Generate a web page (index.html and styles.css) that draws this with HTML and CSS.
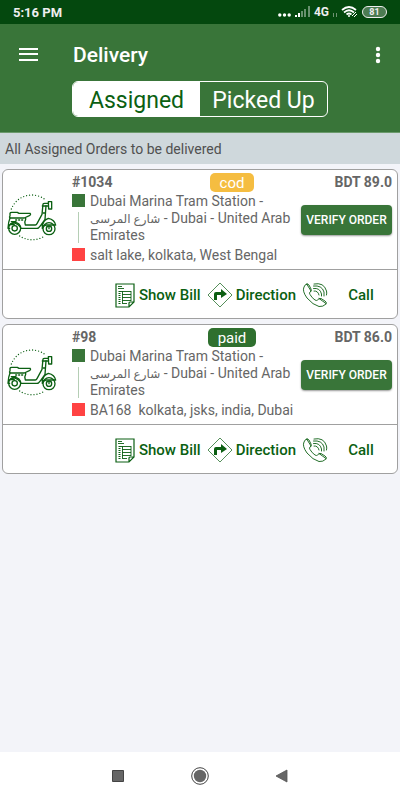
FILE: index.html
```html
<!DOCTYPE html>
<html lang="en">

<head>
    <meta charset="utf-8">
    <meta name="viewport" content="width=device-width, initial-scale=1">
    <title>Delivery</title>
    <link rel="stylesheet" href="styles.css">
</head>

<body>
    <svg class="sprite" aria-hidden="true">
        <symbol id="scooter" viewBox="21 15 150 144">
            <g fill="none" stroke="currentColor" stroke-width="4" stroke-linecap="round" stroke-linejoin="round">
                <path d="M34 60A66 66 0 0 1 136 32M59 141A68 68 0 0 0 134 141" stroke-dasharray="0 9" />
                <path d="M30 81V73Q31 70 35 70H52L57 73H90Q94 77 88 80L73 87H30Q27 84 30 81" />
                <path d="M30 87Q25 98 24 118H29M77 88V91Q72 99 76 108H106Q109 108 111 104L126 76L129 45Q130 43 134 43H144" />
                <path d="M138 50L135 91Q120 113 116 116Q114 118 111 118H63M127 118Q125 95 145 88Q164 92 167 108H138Q128 110 127 118" />
                <path d="M145 38H155V60H146ZM127 51H144M129 72H136" />
                <circle cx="44" cy="118" r="18" />
                <circle cx="44" cy="118" r="8" />
                <circle cx="147" cy="119" r="18" />
                <circle cx="147" cy="119" r="8" />
                <path d="M34 98H48M33 107H43M26 110Q45 92 62 115M147 112V119" />
                <path d="M47 93H72" stroke-dasharray="3 6" />
            </g>
        </symbol>
        <symbol id="bill" viewBox="0 0 20 25">
            <g fill="none" stroke="currentColor">
                <path d="M1 1H19V19L14 24H1ZM19 19H15Q14 19 14 20V24" stroke-width="1.2" />
                <path d="M3 3.500H7M3 5.500H9M7.500 8V20M4 8.500H16M7 11.500H16M7 14.500H16M7 17.500H16M7 20.500H12M16 8V18" stroke-width="0.9" />
                <path d="M4.500 8V21" stroke-width="2" stroke-dasharray="1 1" />
            </g>
        </symbol>
        <symbol id="direction" viewBox="0 0 26 26">
            <path d="M13 1L25 13L13 25L1 13Z" fill="none" stroke="currentColor" stroke-width="0.7" stroke-linejoin="round" />
            <path d="M7 18V12Q7 10 9 10H14V7L20 12L14 16V13H10V18Z" fill="currentColor" />
        </symbol>
        <symbol id="call" viewBox="0 0 26 26">
            <g fill="none" stroke="currentColor" stroke-width="0.9" stroke-linecap="round">
                <path d="M5 2Q3 2 2 5Q0 9 5 16Q11 23 17 24.500Q21 25 24 22Q25 20 23 19L19 16.500Q17 16 15.500 18Q14.500 19 13 18Q10 16 8 12.500Q7 11 8 10Q10 9 9 7L7 3Q6 2 5 2Z" />
                <path d="M5 2.500L9 9M17 16.500L24 21.500M12 2Q22 0 24.500 9Q25 11 24.500 13M11.500 4Q20 3 22 10V14M11.500 6.500Q18 5.500 19.500 12V14M12 9Q16 8.500 17 13" />
            </g>
        </symbol>
    </svg>

    <div class="status-bar">
        <span>5:16 PM</span>
        <div class="status-icons">
            <svg width="13" height="14" viewBox="0 0 13 14" fill="#fff">
                <circle cx="1.800" cy="10" r="1.700" />
                <circle cx="6.500" cy="10" r="1.700" />
                <circle cx="11.200" cy="10" r="1.700" />
            </svg>
            <svg width="15" height="14" viewBox="0 0 15 14" fill="#fff">
                <path d="M0 10H2V12H0ZM3 8H5V12H3Z" />
                <path d="M6 6H8V12H6ZM9 4H11V12H9ZM13 1H15V12H13Z" opacity="0.4" />
            </svg>
            <span class="network">4G</span>
            <svg width="4" height="14" viewBox="0 0 4 14" fill="none" stroke="#6f9272">
                <path d="M0.500 8V12M3.500 8V12" />
            </svg>
            <svg width="17" height="14" viewBox="0 0 17 14" fill="none" stroke="#fff" stroke-width="1.7">
                <path d="M1 5Q8 -1 15 5M3 7.500Q8 3 13 7.500M5.500 9.500Q8 7.500 10.500 9.500" />
                <circle cx="8" cy="11" r="1" fill="#fff" stroke="none" />
                <path d="M11 11L15 7M13 12L16 9" stroke-width="1" />
            </svg>
            <span class="battery">81</span>
        </div>
    </div>

    <header class="header">
        <div class="toolbar">
            <button class="icon-button" type="button" aria-label="Menu">
                <svg width="19" height="14" viewBox="0 0 19 14" fill="#fff">
                    <path d="M0 0H19V2H0ZM0 5H19V7H0ZM0 11H19V13H0Z" />
                </svg>
            </button>
            <h1>Delivery</h1>
            <button class="icon-button" type="button" aria-label="More options">
                <svg width="6" height="18" viewBox="0 0 6 18" fill="#fff">
                    <circle cx="3" cy="3" r="2.200" />
                    <circle cx="3" cy="9" r="2.200" />
                    <circle cx="3" cy="15" r="2.200" />
                </svg>
            </button>
        </div>
        <div class="tabs">
            <button class="tab active" type="button">Assigned</button>
            <button class="tab" type="button">Picked Up</button>
        </div>
    </header>

    <p class="caption">All Assigned Orders to be delivered</p>

    <main class="orders">
        <article class="order">
            <div class="order-body">
                <svg class="scooter"><use href="#scooter" /></svg>
                <div class="order-info">
                    <div class="order-head">
                        <span>#1034</span>
                        <span class="badge cod">cod</span>
                        <span class="price">BDT 89.0</span>
                    </div>
                    <div class="route">
                        <div class="stop from">Dubai Marina Tram Station - <span class="arabic" lang="ar">شارع المرسى</span> - Dubai - United Arab Emirates</div>
                        <div class="stop to">salt lake, kolkata, West Bengal</div>
                        <button class="verify" type="button">VERIFY ORDER</button>
                    </div>
                </div>
            </div>
            <div class="actions">
                <button class="action" type="button"><svg class="bill"><use href="#bill" /></svg>Show Bill</button>
                <button class="action" type="button"><svg><use href="#direction" /></svg>Direction</button>
                <button class="action call" type="button"><svg><use href="#call" /></svg><span>Call</span></button>
            </div>
        </article>

        <article class="order">
            <div class="order-body">
                <svg class="scooter"><use href="#scooter" /></svg>
                <div class="order-info">
                    <div class="order-head">
                        <span>#98</span>
                        <span class="badge paid">paid</span>
                        <span class="price">BDT 86.0</span>
                    </div>
                    <div class="route">
                        <div class="stop from">Dubai Marina Tram Station - <span class="arabic" lang="ar">شارع المرسى</span> - Dubai - United Arab Emirates</div>
                        <div class="stop to">BA168&nbsp; kolkata, jsks, india, Dubai</div>
                        <button class="verify" type="button">VERIFY ORDER</button>
                    </div>
                </div>
            </div>
            <div class="actions">
                <button class="action" type="button"><svg class="bill"><use href="#bill" /></svg>Show Bill</button>
                <button class="action" type="button"><svg><use href="#direction" /></svg>Direction</button>
                <button class="action call" type="button"><svg><use href="#call" /></svg><span>Call</span></button>
            </div>
        </article>
    </main>

    <nav class="system-nav">
        <button class="icon-button" type="button" aria-label="Recent apps">
            <svg width="18" height="18" viewBox="0 0 18 18">
                <path d="M3.500 3.500H14.500V14.500H3.500Z" fill="#666" stroke="#444" />
            </svg>
        </button>
        <button class="icon-button" type="button" aria-label="Home">
            <svg width="18" height="18" viewBox="0 0 18 18">
                <circle cx="9" cy="9" r="8.300" fill="none" stroke="#444" />
                <circle cx="9" cy="9" r="6.200" fill="#666" />
            </svg>
        </button>
        <button class="icon-button" type="button" aria-label="Back">
            <svg width="18" height="18" viewBox="0 0 18 18">
                <path d="M3 9L14 3V15Z" fill="#666" stroke="#555" stroke-width="0.8" />
            </svg>
        </button>
    </nav>
</body>

</html>
```
FILE: styles.css
```css
:root {
    --green: #397539;
    --dark-green: #0b5f12;
    font-family: Roboto, "DejaVu Sans", sans-serif;
}

* {
    box-sizing: border-box;
}

body {
    display: flex;
    flex-direction: column;
    min-height: 100vh;
    margin: 0;
    background-color: #f3f4f9;
    color: #666;
    font-size: 14px;
    line-height: 17px;
}

button {
    padding: 0;
    border: none;
    background: none;
    color: inherit;
    font: inherit;
    cursor: pointer;
}

svg {
    display: block;
    flex: none;
}

.sprite {
    position: absolute;
    width: 0;
    height: 0;
}

.status-bar {
    display: flex;
    align-items: center;
    justify-content: space-between;
    height: 24px;
    padding: 0 13px;
    background-color: #04480e;
    color: #eee;
    font-size: 13px;
    font-weight: 700;
}

.status-icons {
    display: flex;
    align-items: center;
    gap: 4px;
}

.network {
    font-size: 12px;
}

.battery {
    width: 25px;
    border: 1px solid #eee;
    border-radius: 6px;
    background-color: #4c7c52;
    font-size: 9px;
    line-height: 10px;
    text-align: center;
}

.header {
    padding: 4px 19px 15px;
    background-color: var(--green);
    color: white;
}

.toolbar {
    display: flex;
    align-items: center;
    height: 53px;
}

.toolbar h1 {
    flex: 1;
    margin: 0 0 0 35px;
    font-size: 21px;
    font-weight: 500;
    line-height: 24px;
}

.tabs {
    display: grid;
    grid-template-columns: 1fr 1fr;
    width: 256px;
    margin: 0 auto;
    border: 1px solid white;
    border-radius: 6px;
    overflow: hidden;
}

.tab {
    height: 34px;
    padding-top: 3px;
    font-size: 23px;
    line-height: 31px;
}

.tab.active {
    background-color: white;
    color: var(--dark-green);
}

.caption {
    margin: 0;
    padding: 8px 5px 6px;
    border-top: 1px solid #6b9a6c;
    background-color: #cfd8dc;
    color: #505050;
}

.orders {
    flex: 1;
    display: flex;
    flex-direction: column;
    gap: 5px;
    padding: 5px 2px;
}

.order {
    border: 1px solid #a0a0a0;
    border-radius: 6px;
    background-color: white;
}

.order-body {
    display: flex;
    align-items: center;
    gap: 15px;
    min-height: 100px;
    padding: 2px 5px 5px 4px;
    border-bottom: 1px solid #a0a0a0;
}

.scooter {
    width: 50px;
    height: 48px;
    color: var(--dark-green);
}

.order-info {
    flex: 1;
    min-width: 0;
}

.order-head {
    display: grid;
    grid-template-columns: 1fr auto 1fr;
    height: 20px;
    font-size: 14px;
    font-weight: 700;
    line-height: 18px;
}

.price {
    text-align: right;
}

.badge {
    padding: 0 10px;
    height: 19px;
    border-radius: 5px;
    color: white;
    font-size: 15px;
    font-weight: 400;
    line-height: 20px;
}

.cod {
    background-color: #f5bd41;
}

.paid {
    background-color: #2f702f;
}

.route {
    display: grid;
    grid-template-columns: minmax(0, 1fr) 91px;
    column-gap: 5px;
    row-gap: 3px;
}

.stop {
    grid-column: 1;
    position: relative;
    padding-left: 18px;
}

.stop.to {
    white-space: nowrap;
}

.stop::before {
    content: "";
    position: absolute;
    left: 0;
    top: 1px;
    width: 13px;
    height: 13px;
    background-color: var(--green);
}

.stop.to::before {
    background-color: #ff4343;
}

/* line joining the pickup and drop markers */
.stop.from::after {
    content: "";
    position: absolute;
    left: 6px;
    top: 19px;
    bottom: 1px;
    width: 1px;
    background-color: #b5ceb5;
}

.arabic {
    font-size: 12px;
    line-height: 1;
    white-space: nowrap;
}

.verify {
    grid-column: 2;
    grid-row: 1;
    align-self: center;
    height: 30px;
    margin-top: 4px;
    border-radius: 4px;
    background-color: var(--green);
    box-shadow: 0 1px 2px #0006;
    color: white;
    font-size: 12px;
    font-weight: 500;
}

.actions {
    display: flex;
    justify-content: flex-end;
    gap: 6px;
    padding: 12px 6px 10px;
}

.action {
    display: flex;
    align-items: center;
    gap: 3px;
    color: var(--dark-green);
    font-size: 15px;
    font-weight: 500;
}

.action svg {
    width: 26px;
    height: 26px;
}

.action .bill {
    width: 20px;
    height: 25px;
    margin-right: 1px;
}

.call span {
    width: 60px;
    text-align: center;
}

.system-nav {
    display: flex;
    align-items: center;
    justify-content: center;
    gap: 64px;
    height: 48px;
    background-color: white;
}
```
